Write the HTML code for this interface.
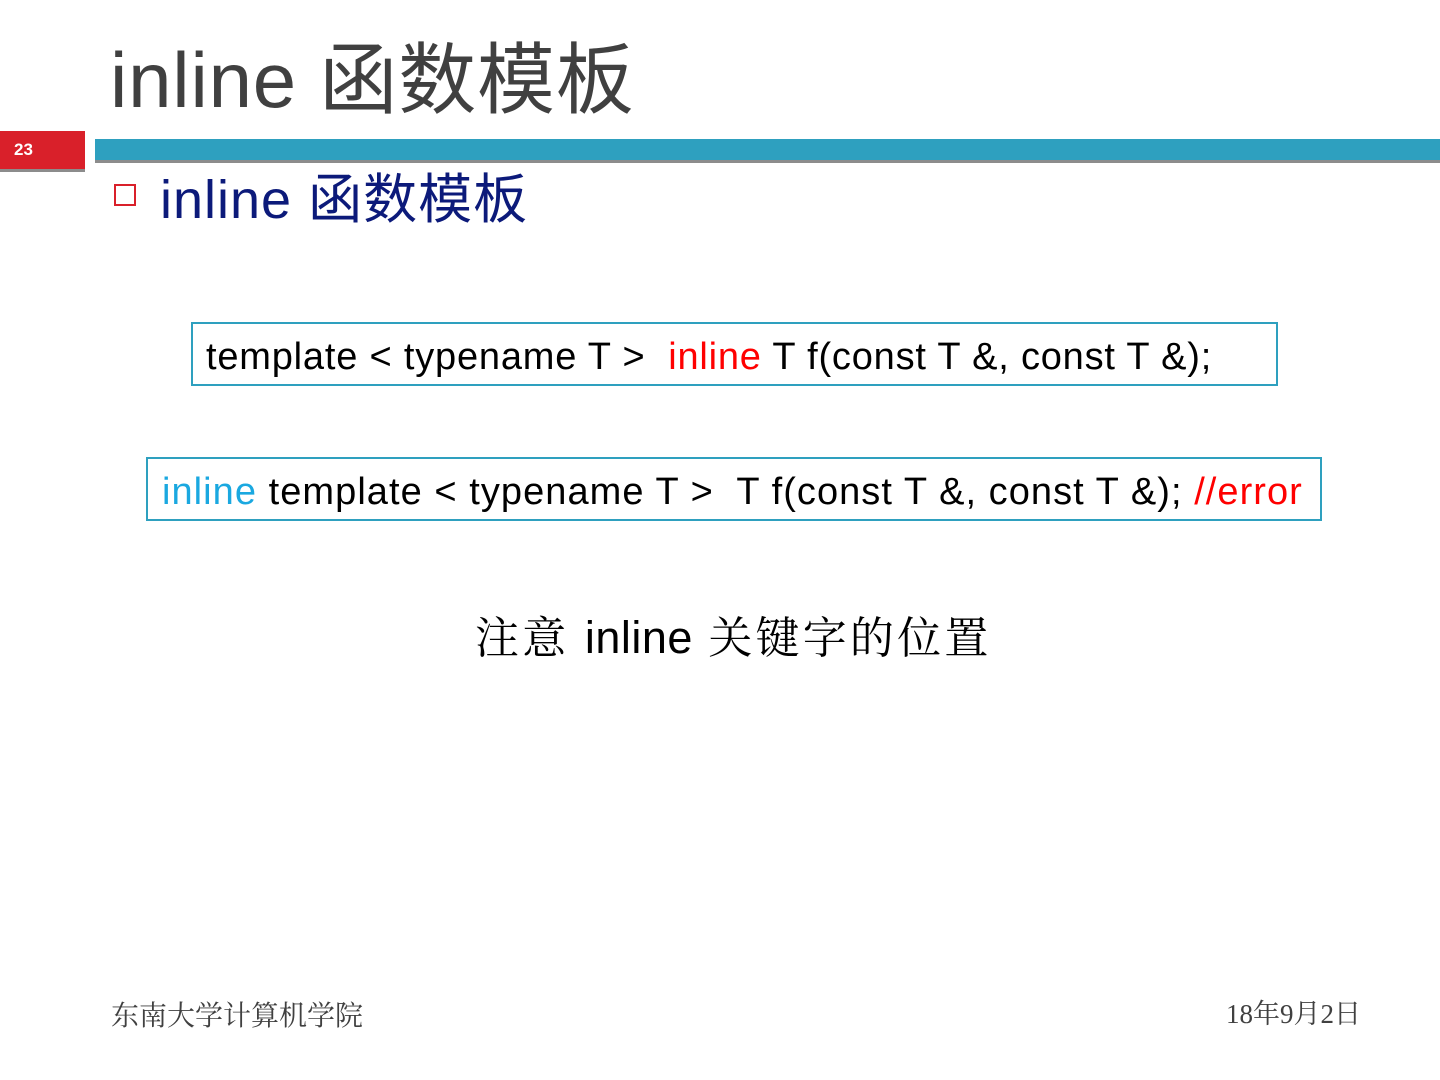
<!DOCTYPE html>
<html><head><meta charset="utf-8"><style>
body{margin:0;width:1440px;height:1080px;background:#fff;position:relative;overflow:hidden;font-family:"Liberation Sans","Noto Sans CJK SC",sans-serif}
.a{position:absolute;white-space:nowrap}
</style></head><body>
<div class="a" style="left:110px;top:34px;font-size:78px;color:#404040;line-height:92px;letter-spacing:0.8px">inline 函数模板</div>
<div class="a" style="left:0;top:131px;width:85px;height:38px;background:#d9202a;border-bottom:3px solid #8c8c8c"></div>
<div class="a" style="left:14px;top:140px;font-size:17px;font-weight:bold;color:#fff;line-height:20px">23</div>
<div class="a" style="left:95px;top:139px;width:1345px;height:21px;background:#2ea0bf;border-bottom:3px solid #8c8c8c"></div>
<div class="a" style="left:114px;top:184px;width:18px;height:18px;border:2px solid #d9202a"></div>
<div class="a" style="left:160px;top:168px;font-size:54px;color:#0c1a7a;line-height:64px;letter-spacing:1px">inline 函数模板</div>
<div class="a" style="left:191px;top:322px;width:1083px;height:60px;border:2px solid #2ea0bf"></div>
<div class="a" style="left:206px;top:335px;font-size:38px;line-height:44px;color:#000;letter-spacing:0.8px">template &lt; typename T &gt;&nbsp; <span style="color:#f00">inline</span> T f(const T &amp;, const T &amp;);</div>
<div class="a" style="left:146px;top:457px;width:1172px;height:60px;border:2px solid #2ea0bf"></div>
<div class="a" style="left:162px;top:470px;font-size:38px;line-height:44px;color:#000;letter-spacing:1.05px"><span style="color:#1aa8e0">inline</span> template &lt; typename T &gt;&nbsp; T f(const T &amp;, const T &amp;); <span style="color:#f00">//error</span></div>
<div class="a" style="left:475px;top:612px;font-size:44px;line-height:52px;color:#000;letter-spacing:3.2px;font-family:'Liberation Sans','Noto Serif CJK SC',serif">注意 <span style="font-family:'Liberation Sans',sans-serif;font-size:45px;letter-spacing:0.5px">inline</span> 关键字的位置</div>
<div class="a" style="left:111px;top:997px;font-size:28px;line-height:34px;color:#404040;font-family:'Noto Serif CJK SC',serif">东南大学计算机学院</div>
<div class="a" style="left:1226px;top:997px;font-size:27px;line-height:34px;color:#404040;font-family:'Liberation Serif','Noto Serif CJK SC',serif">18年9月2日</div>
</body></html>
